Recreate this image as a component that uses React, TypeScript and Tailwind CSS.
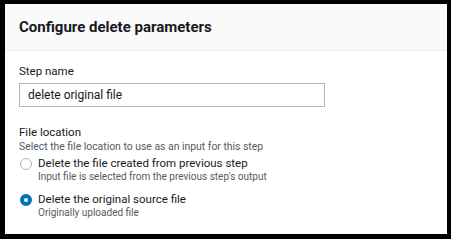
import React from "react";

export default function App() {
  return (
    <div
      className="w-[451px] h-[239px] bg-black pl-[5px] pt-[4px] pr-[4px] pb-[5px]"
      style={{ fontFamily: 'Roboto, "Noto Sans", sans-serif' }}
    >
      <div className="w-full h-full bg-white flex flex-col text-[#16191f]">
        <div className="h-[47px] bg-[#fafafa] border-b border-[#eaeded] flex items-center pl-[14px]">
          <h2 className="text-[15px] font-bold leading-none">Configure delete parameters</h2>
        </div>
        <div className="pl-[14px] pt-[12px] flex flex-col">
          <label className="text-[11.5px] leading-[16px]">Step name</label>
          <div className="mt-[4px] w-[306px] h-[24px] border border-[#aab7b8] flex items-center pl-[8px] text-[12px]">
            delete original file
          </div>
          <div className="mt-[17px] text-[11.5px] leading-[16px]">File location</div>
          <div className="text-[10.4px] leading-[14px] text-[#545b64]">
            Select the file location to use as an input for this step
          </div>
          <div className="mt-[2px] flex items-start">
            <span className="mt-[2px] ml-[1px] w-[12px] h-[12px] rounded-full border border-[#aab7b8] bg-white shrink-0" />
            <div className="ml-[6px] flex flex-col">
              <span className="text-[11.5px] leading-[14px]">Delete the file created from previous step</span>
              <span className="text-[10px] leading-[13px] text-[#545b64]">
                Input file is selected from the previous step's output
              </span>
            </div>
          </div>
          <div className="mt-[9px] flex items-start">
            <span className="mt-[2px] ml-[1px] w-[12px] h-[12px] rounded-full border-[4px] border-[#0073bb] bg-white shrink-0" />
            <div className="ml-[6px] flex flex-col">
              <span className="text-[11.5px] leading-[14px]">Delete the original source file</span>
              <span className="text-[10px] leading-[13px] text-[#545b64]">Originally uploaded file</span>
            </div>
          </div>
        </div>
      </div>
    </div>
  );
}
